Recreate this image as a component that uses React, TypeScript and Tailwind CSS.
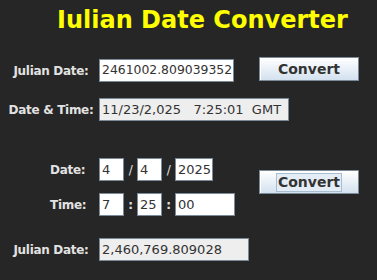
import React from 'react'

const label = 'font-["DejaVu_Sans",sans-serif] font-bold text-[12px] tracking-[-0.3px] text-[#e2e2e2] whitespace-nowrap'
const fieldBase = 'h-[23px] border border-[#7a8a99] px-[2px] flex items-center overflow-hidden whitespace-pre font-["DejaVu_Sans",sans-serif] text-[#333333]'

function Field({ value, width, readOnly, size = 'text-[13px]' }: { value: string; width: string; readOnly?: boolean; size?: string }) {
  return (
    <div className={`${fieldBase} ${size} ${width} ${readOnly ? 'bg-[#eeeeee]' : 'bg-white'}`}>
      {value}
    </div>
  )
}

function ConvertButton({ focused }: { focused?: boolean }) {
  return (
    <button className="w-[100px] h-[24px] flex items-center justify-center border border-[#7a8a99] bg-gradient-to-b from-white to-[#d3e1ef] shadow-[inset_1px_1px_0_#ffffff] font-['DejaVu_Sans',sans-serif] font-bold text-[14px] text-[#333333]">
      {focused ? (
        <span className="border border-[#a8bdd2] bg-[#e4edf6] px-[1px] leading-[17px]">Convert</span>
      ) : (
        'Convert'
      )}
    </button>
  )
}

export default function App() {
  return (
    <div className="w-[377px] h-[280px] bg-[#262626] flex flex-col overflow-hidden">
      {/* title, J descender clipped like the original label */}
      <div className="mt-[6px] h-[22px] overflow-hidden pl-[57px] font-['DejaVu_Sans',sans-serif] font-bold text-[24px] leading-[28px] text-[#ffff00] whitespace-nowrap">
        Julian Date Converter
      </div>

      <div className="mt-[29px] flex items-start">
        <div className={`w-[99px] pl-[3px] h-[23px] mt-[2px] flex items-center justify-center ${label}`}>Julian Date:</div>
        <div className="mt-[2px]">
          <Field value="2461002.809039352" width="w-[135px]" size="text-[12.4px]" />
        </div>
        <div className="ml-[25px]">
          <ConvertButton />
        </div>
      </div>

      <div className="mt-[16px] flex items-start">
        <div className={`w-[99px] pl-[3px] h-[23px] flex items-center justify-center ${label}`}>Date &amp; Time:</div>
        <Field value="11/23/2,025   7:25:01  GMT" width="w-[190px]" readOnly />
      </div>

      <div className="mt-[37px] flex items-start">
        <div className="flex flex-col gap-[12px]">
          <div className="flex items-center">
            <div className={`w-[99px] pl-[50px] ${label}`}>Date:</div>
            <Field value="4" width="w-[25px]" />
            <div className={`w-[13px] text-center ${label} font-normal`}>/</div>
            <Field value="4" width="w-[25px]" />
            <div className={`w-[13px] text-center ${label} font-normal`}>/</div>
            <Field value="2025" width="w-[38px]" />
          </div>
          <div className="flex items-center">
            <div className={`w-[99px] pl-[50px] ${label}`}>Time:</div>
            <Field value="7" width="w-[25px]" />
            <div className={`w-[13px] text-center ${label}`}>:</div>
            <Field value="25" width="w-[25px]" />
            <div className={`w-[13px] text-center ${label}`}>:</div>
            <Field value="00" width="w-[60px]" />
          </div>
        </div>
        <div className="ml-[24px] mt-[12px]">
          <ConvertButton focused />
        </div>
      </div>

      <div className="mt-[22px] flex items-start">
        <div className={`w-[99px] pl-[3px] h-[23px] flex items-center justify-center ${label}`}>Julian Date:</div>
        <Field value="2,460,769.809028" width="w-[150px]" readOnly />
      </div>
    </div>
  )
}
